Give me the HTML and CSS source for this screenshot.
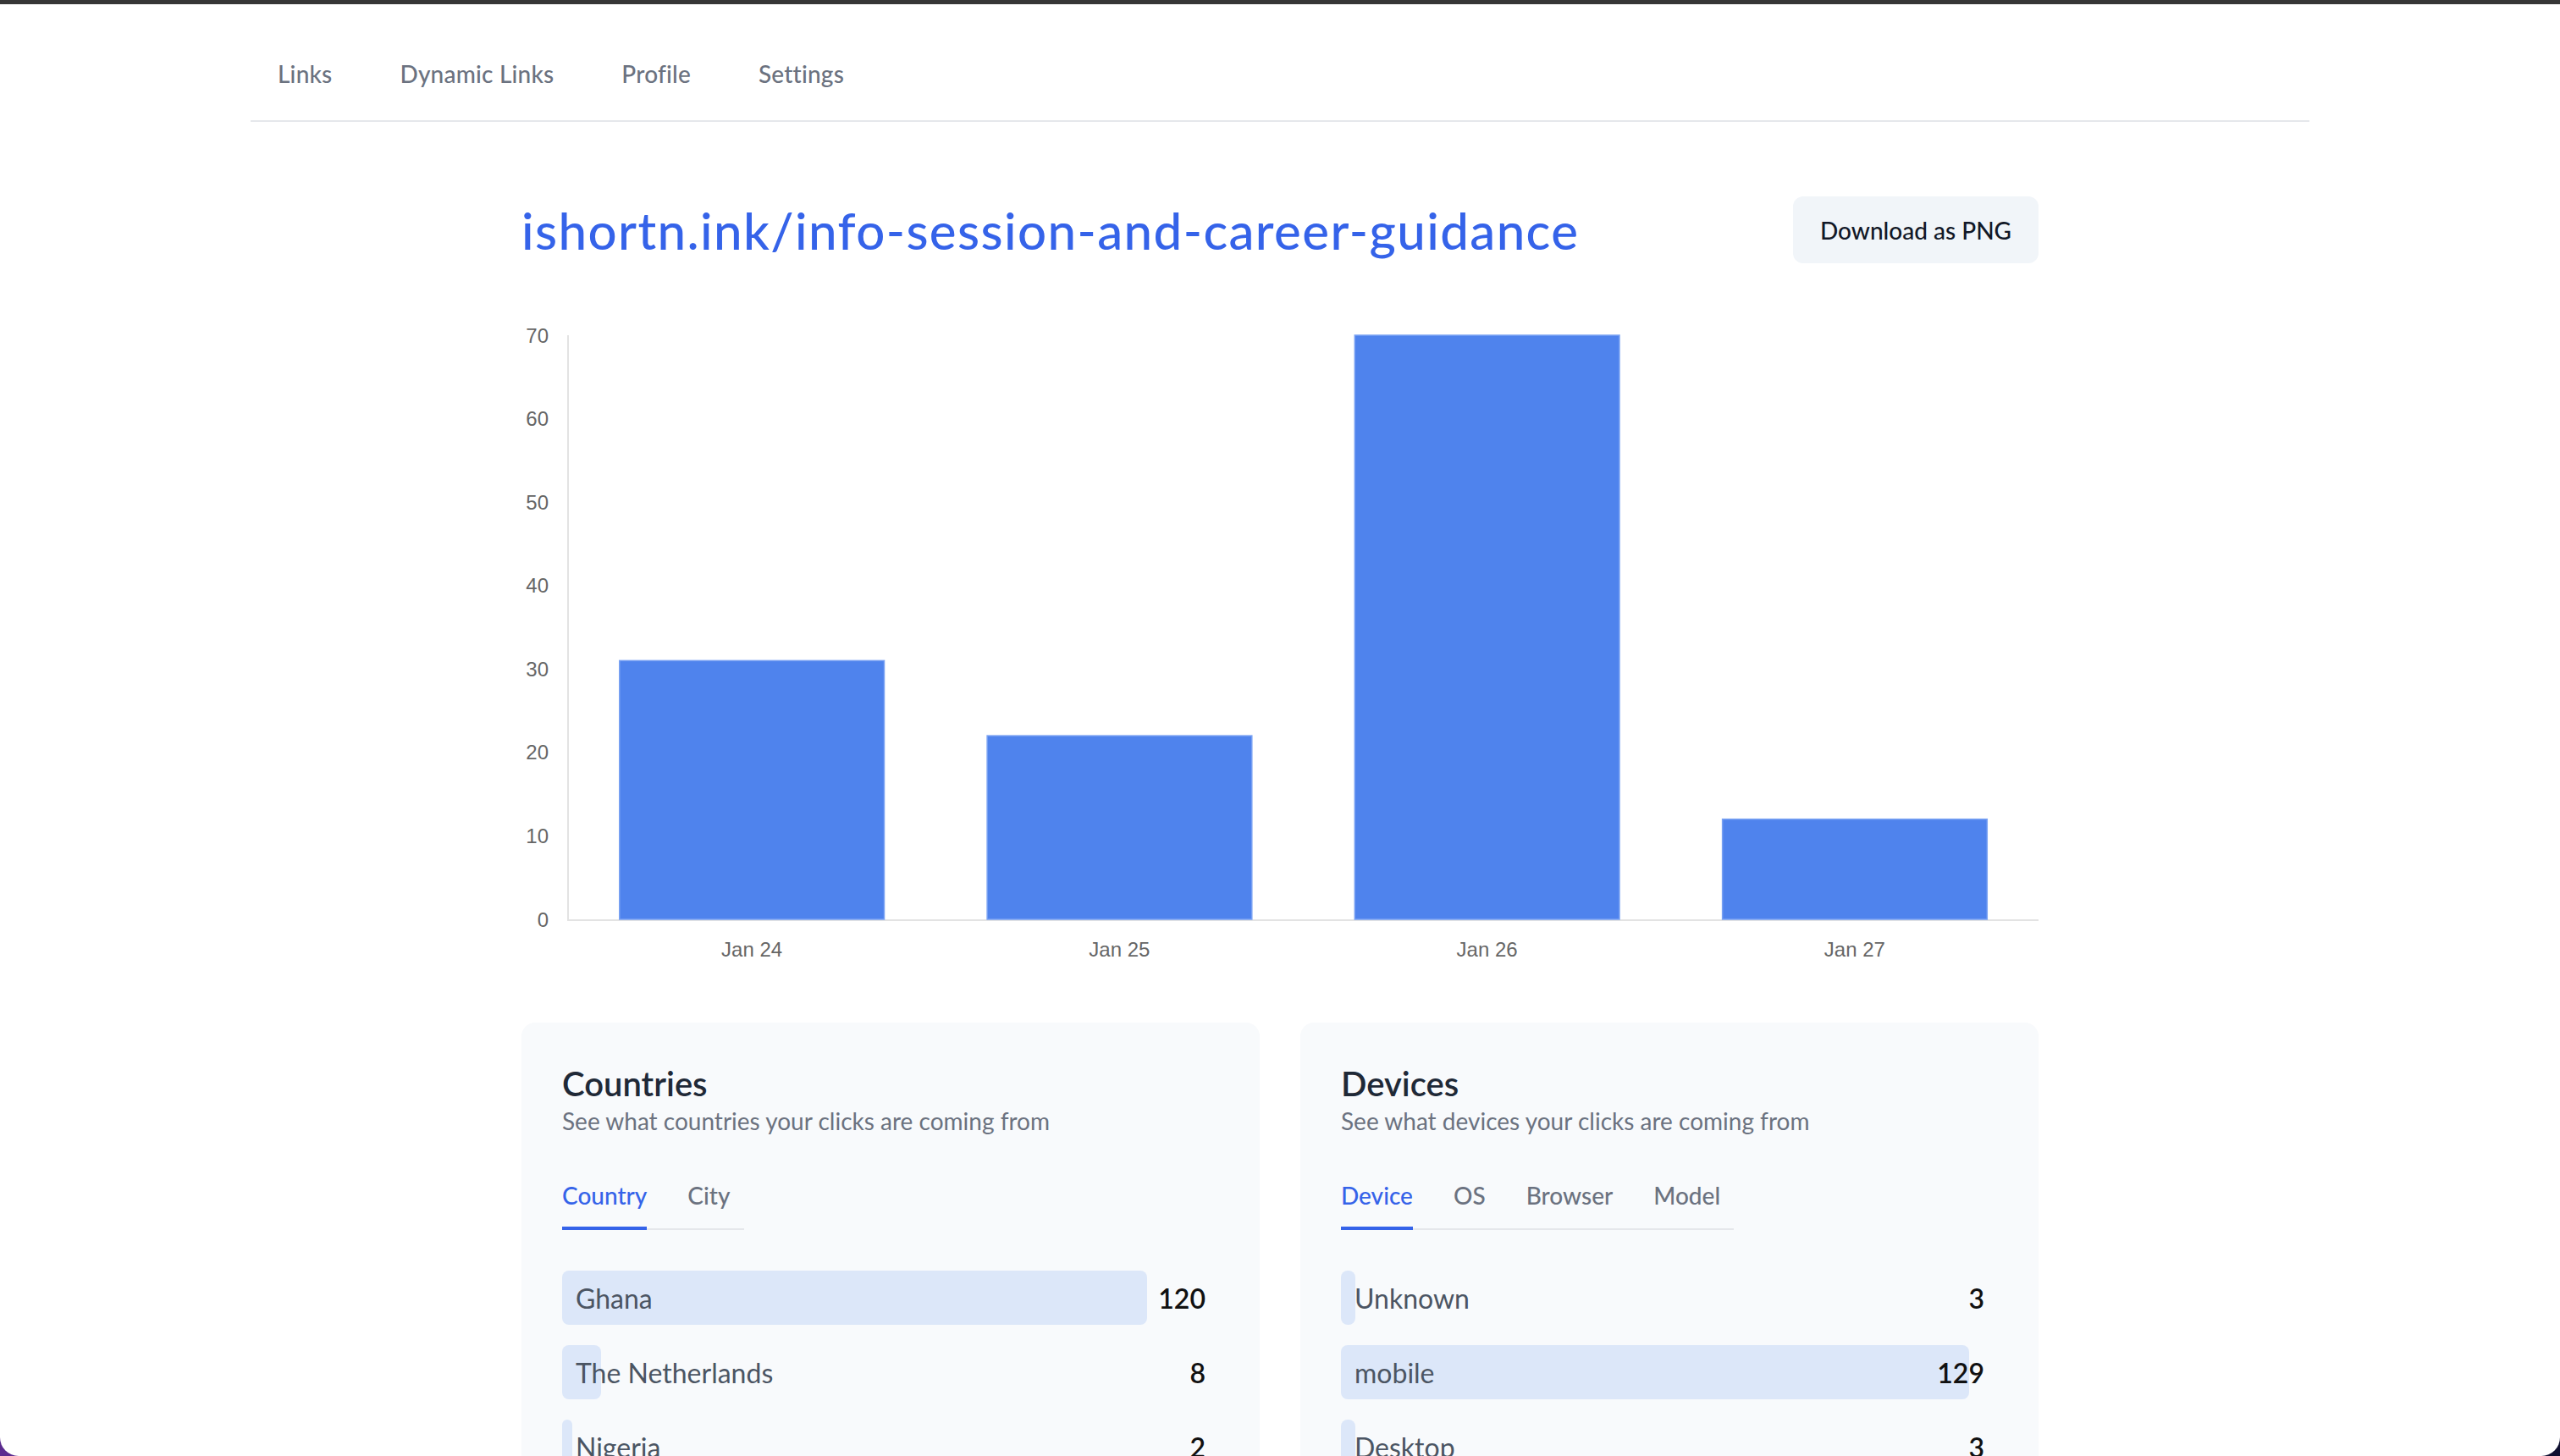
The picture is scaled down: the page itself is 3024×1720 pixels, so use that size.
FILE: index.html
```html
<!DOCTYPE html>
<html lang="en">
<head>
<meta charset="utf-8">
<title>ishortn.ink analytics</title>
<link rel="stylesheet" href="styles.css">
</head>
<body>
<div class="window">
  <nav class="topnav">
    <a class="nav-link" href="#">Links</a>
    <a class="nav-link" href="#">Dynamic Links</a>
    <a class="nav-link" href="#">Profile</a>
    <a class="nav-link" href="#">Settings</a>
  </nav>

  <main class="main">
    <header class="page-header">
      <h1 class="page-title">ishortn.ink/info-session-and-career-guidance</h1>
      <button class="btn">Download as PNG</button>
    </header>

    <svg class="chart" width="1792" height="790" viewBox="0 0 1792 790" xmlns="http://www.w3.org/2000/svg">
      <g class="ylabels" font-family="Liberation Sans, Arial, sans-serif" font-size="24" fill="#666" text-anchor="end">
        <text x="32" y="44.5">70</text>
        <text x="32" y="143.1">60</text>
        <text x="32" y="241.6">50</text>
        <text x="32" y="340.2">40</text>
        <text x="32" y="438.8">30</text>
        <text x="32" y="537.4">20</text>
        <text x="32" y="635.9">10</text>
        <text x="32" y="734.5">0</text>
      </g>
      <rect x="54" y="36" width="2" height="692" fill="#e3e3e3"/>
      <rect x="54" y="726" width="1738" height="2" fill="#e3e3e3"/>
      <g fill="#4f83ed" stroke="#7aa2f3" stroke-width="1.5">
        <rect x="115.8" y="420.4" width="312.7" height="305.6"/>
        <rect x="550.1" y="509.1" width="312.7" height="216.9"/>
        <rect x="984.3" y="36" width="312.7" height="690"/>
        <rect x="1418.6" y="607.7" width="312.7" height="118.3"/>
      </g>
      <g font-family="Liberation Sans, Arial, sans-serif" font-size="24" fill="#666" text-anchor="middle">
        <text x="272.1" y="770">Jan 24</text>
        <text x="706.4" y="770">Jan 25</text>
        <text x="1140.6" y="770">Jan 26</text>
        <text x="1574.9" y="770">Jan 27</text>
      </g>
    </svg>

    <div class="cards">
      <section class="card">
        <h2 class="card-title">Countries</h2>
        <p class="card-sub">See what countries your clicks are coming from</p>
        <div class="tabs">
          <span class="tab active">Country</span>
          <span class="tab">City</span>
        </div>
        <div class="bars">
          <div class="row">
            <div class="bar" style="width: 691px"></div>
            <div class="row-content"><span class="label">Ghana</span><span class="value">120</span></div>
          </div>
          <div class="row">
            <div class="bar" style="width: 46px"></div>
            <div class="row-content"><span class="label">The Netherlands</span><span class="value">8</span></div>
          </div>
          <div class="row">
            <div class="bar" style="width: 12px"></div>
            <div class="row-content"><span class="label">Nigeria</span><span class="value">2</span></div>
          </div>
        </div>
      </section>

      <section class="card">
        <h2 class="card-title">Devices</h2>
        <p class="card-sub">See what devices your clicks are coming from</p>
        <div class="tabs">
          <span class="tab active">Device</span>
          <span class="tab">OS</span>
          <span class="tab">Browser</span>
          <span class="tab">Model</span>
        </div>
        <div class="bars">
          <div class="row">
            <div class="bar" style="width: 17px"></div>
            <div class="row-content"><span class="label">Unknown</span><span class="value">3</span></div>
          </div>
          <div class="row">
            <div class="bar" style="width: 742px"></div>
            <div class="row-content"><span class="label">mobile</span><span class="value">129</span></div>
          </div>
          <div class="row">
            <div class="bar" style="width: 17px"></div>
            <div class="row-content"><span class="label">Desktop</span><span class="value">3</span></div>
          </div>
        </div>
      </section>
    </div>
  </main>
</div>
</body>
</html>
```
FILE: styles.css
```css
* {
  box-sizing: border-box;
}

html,
body {
  margin: 0;
  padding: 0;
}

body {
  background: linear-gradient(90deg, #5b2b8f 0%, #2a1a55 40%, #0f1030 100%);
  font-family: Lato, "Open Sans", sans-serif;
}

.window {
  height: 1720px;
  overflow: hidden;
  background: #ffffff;
  border-top: 5px solid #363636;
  border-radius: 0 0 22px 22px;
}

.topnav {
  width: 2432px;
  margin: 0 auto;
  display: flex;
  gap: 16px;
  padding-top: 62px;
  padding-bottom: 35px;
  border-bottom: 2px solid #e5e7eb;
}

.nav-link {
  padding: 0 32px;
  font-size: 28px;
  line-height: 40px;
  font-weight: 500;
  letter-spacing: 0.2px;
  color: #6b7280;
  text-decoration: none;
}

.main {
  width: 1792px;
  margin: 88px auto 0;
}

.page-header {
  display: flex;
  justify-content: space-between;
  align-items: center;
  height: 79px;
}

.page-title {
  margin: 0;
  font-size: 60px;
  line-height: 72px;
  font-weight: 500;
  letter-spacing: 1.4px;
  color: #3563e9;
}

.btn {
  height: 79px;
  padding: 0 32px;
  border: none;
  border-radius: 12px;
  background: #f1f5f9;
  font-family: inherit;
  font-size: 28px;
  font-weight: 500;
  color: #111827;
}

.chart {
  display: block;
  margin-top: 49px;
}

.cards {
  display: grid;
  grid-template-columns: 1fr 1fr;
  gap: 48px;
  margin-top: 58px;
}

.card {
  background: #f8fafc;
  border-radius: 16px;
  padding: 48px;
  min-height: 700px;
}

.card-title {
  margin: 0;
  font-size: 40px;
  line-height: 48px;
  font-weight: 600;
  color: #1f2937;
}

.card-sub {
  margin: 0;
  font-size: 28px;
  line-height: 40px;
  color: #6b7280;
}

.tabs {
  display: flex;
  width: fit-content;
  gap: 48px;
  margin-top: 48px;
  padding-right: 16px;
  border-bottom: 2px solid #e5e7eb;
}

.tab {
  font-size: 28px;
  line-height: 40px;
  font-weight: 500;
  color: #6b7280;
  padding-bottom: 17px;
  border-bottom: 4px solid transparent;
  margin-bottom: -2px;
}

.tab.active {
  color: #3563e9;
  border-bottom-color: #3563e9;
}

.bars {
  display: flex;
  flex-direction: column;
  gap: 24px;
  margin-top: 48px;
}

.row {
  display: grid;
  height: 64px;
}

.bar,
.row-content {
  grid-area: 1 / 1;
}

.bar {
  justify-self: start;
  height: 64px;
  background: #dce7f9;
  border-radius: 8px;
}

.row-content {
  display: flex;
  justify-content: space-between;
  align-items: center;
  padding: 0 16px;
  font-size: 32px;
}

.label {
  color: #4b5563;
}

.value {
  color: #111111;
  font-weight: 600;
}
```
